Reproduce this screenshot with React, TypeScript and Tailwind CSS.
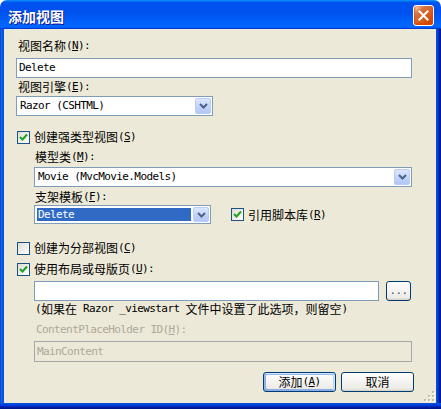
import type { ReactNode } from 'react';

const cjk = "font-['Noto_Sans_CJK_SC',sans-serif] text-[12px] leading-[16px]";
const mono = "font-['DejaVu_Sans_Mono',monospace] text-[11px] tracking-[-0.6px] leading-[16px]";

// label like 视图名称(N):
function Label({ text, keyChar, colon = true, className = '' }: { text: string; keyChar?: string; colon?: boolean; className?: string }) {
  return (
    <div className={`h-[16px] flex items-center text-black whitespace-nowrap ${className}`}>
      <span className={cjk}>{text}</span>
      {keyChar && (
        <span className={mono}>
          (<u>{keyChar}</u>){colon ? ':' : ''}
        </span>
      )}
    </div>
  );
}

function Chevron() {
  return (
    <svg width="9" height="6" viewBox="0 0 9 6">
      <path d="M1 1 L4.5 4.5 L8 1" fill="none" stroke="#4D6185" strokeWidth="2" />
    </svg>
  );
}

function Combo({ value, className, selected = false }: { value: string; className: string; selected?: boolean }) {
  return (
    <div className={`h-[20px] flex border border-[#7F9DB9] bg-white ${className}`}>
      <div className="flex-1 flex items-center p-[2px]">
        {selected ? (
          <div className="w-full h-full bg-[#316AC5] text-white flex items-center pl-[1px]">
            <span className={mono}>{value}</span>
          </div>
        ) : (
          <span className={`${mono} pl-[1px] text-black`}>{value}</span>
        )}
      </div>
      <div className="w-[16px] my-[1px] mr-[1px] rounded-[2px] border border-[#B9CDF5] bg-[linear-gradient(180deg,#DCE7FE,#C3D5FB_50%,#B2C7F6)] flex items-center justify-center">
        <Chevron />
      </div>
    </div>
  );
}

function CheckBox({ checked }: { checked: boolean }) {
  return (
    <div className="w-[13px] h-[13px] border border-[#1C5180] bg-[linear-gradient(135deg,#DCDCD7,#FFFFFF)] flex items-center justify-center shrink-0">
      {checked && (
        <svg width="9" height="9" viewBox="0 0 9 9">
          <path d="M1 4 L3.5 6.5 L8 1.5" fill="none" stroke="#21A121" strokeWidth="2" />
        </svg>
      )}
    </div>
  );
}

function CheckRow({ checked, children, className = '' }: { checked: boolean; children: ReactNode; className?: string }) {
  return (
    <div className={`h-[16px] flex items-center gap-[4px] ${className}`}>
      <CheckBox checked={checked} />
      {children}
    </div>
  );
}

function XpButton({ children, isDefault = false, className = '' }: { children: ReactNode; isDefault?: boolean; className?: string }) {
  return (
    <div
      className={`h-[20px] rounded-[3px] border border-[#003C74] bg-[linear-gradient(180deg,#FFFFFF,#ECEBE6_86%,#D6D0C5)] flex items-center justify-center text-black ${
        isDefault
          ? 'shadow-[inset_-1px_1px_#CEE7FF,inset_1px_2px_#98B8EA,inset_-2px_2px_#BCD4F6,inset_1px_-1px_#89ADE4,inset_2px_-2px_#89ADE4]'
          : ''
      } ${className}`}
    >
      {children}
    </div>
  );
}

export default function App() {
  return (
    <div className="w-[441px] h-[409px] bg-white">
      <div className="w-[441px] h-[409px] flex flex-col rounded-t-[7px] overflow-hidden">
        {/* Title bar */}
        <div className="h-[29px] shrink-0 flex items-center justify-between pl-[8px] pr-[7px] pt-[2px] bg-[linear-gradient(180deg,#0997FF,#0053EE_8%,#0050EE_40%,#0066FF_88%,#0066FF_93%,#005BFF_95%,#003DD7_96%,#003DD7)]">
          <span className="text-white font-bold text-[14px] leading-[16px] font-['Noto_Sans_CJK_SC',sans-serif] [text-shadow:1px_1px_#0F1089]">
            添加视图
          </span>
          <div className="w-[21px] h-[21px] rounded-[3px] border border-white bg-[radial-gradient(circle_at_90%_90%,#CC4600_0,#DC6527_55%,#CD7546_70%,#FFCCB2_90%,#FFFFFF_100%)] shadow-[inset_0_-1px_2px_1px_#DA4600] flex items-center justify-center">
            <svg width="11" height="11" viewBox="0 0 11 11">
              <path d="M1.5 1.5 L9.5 9.5 M9.5 1.5 L1.5 9.5" stroke="white" strokeWidth="2" strokeLinecap="square" />
            </svg>
          </div>
        </div>

        <div className="flex flex-1">
          <div className="w-[4px] bg-[linear-gradient(90deg,#0831D9,#166AEE_30%,#0855DD_60%,#0855DD)]" />

          {/* Dialog body */}
          <div className="flex-1 relative bg-[#ECE9D8] pl-[12px] flex flex-col">
            <Label text="视图名称" keyChar="N" className="mt-[9px] ml-[2px]" />
            <div className="mt-[4px] h-[20px] w-[396px] border border-[#7F9DB9] bg-white flex items-center pl-[2px]">
              <span className={`${mono} text-black`}>Delete</span>
            </div>

            <Label text="视图引擎" keyChar="E" className="mt-[1px] ml-[2px]" />
            <Combo value="Razor (CSHTML)" className="mt-[1px] w-[197px]" />

            <CheckRow checked className="mt-[13px] ml-[1px]">
              <Label text="创建强类型视图" keyChar="S" colon={false} />
            </CheckRow>

            <Label text="模型类" keyChar="M" className="mt-[4px] ml-[19px]" />
            <Combo value="Movie (MvcMovie.Models)" className="mt-[2px] ml-[18px] w-[378px]" />

            <Label text="支架模板" keyChar="F" className="mt-[2px] ml-[19px]" />
            <div className="h-[19px] flex items-center">
              <Combo value="Delete" selected className="ml-[18px] w-[177px] !h-[19px]" />
              <CheckRow checked className="ml-[20px]">
                <Label text="引用脚本库" keyChar="R" colon={false} />
              </CheckRow>
            </div>

            <CheckRow checked={false} className="mt-[16px] ml-[1px]">
              <Label text="创建为分部视图" keyChar="C" colon={false} />
            </CheckRow>
            <CheckRow checked className="mt-[5px] ml-[1px]">
              <Label text="使用布局或母版页" keyChar="U" />
            </CheckRow>

            <div className="mt-[4px] h-[20px] flex items-center">
              <div className="ml-[18px] w-[345px] h-[20px] border border-[#7F9DB9] bg-white" />
              <XpButton className="ml-[7px] w-[25px]">
                <span className={`${mono} text-[#555]`}>...</span>
              </XpButton>
            </div>

            <div className="h-[15px] ml-[19px] flex items-center whitespace-pre text-black">
              <span className={mono}>(</span>
              <span className={cjk}>如果在</span>
              <span className={`${mono} whitespace-pre`}>{' Razor _viewstart '}</span>
              <span className={cjk}>文件中设置了此选项，则留空</span>
              <span className={mono}>)</span>
            </div>

            <div className="mt-[6px] ml-[20px] h-[16px] flex items-center text-[#ACA899]">
              <span className={mono}>
                ContentPlaceHolder ID(<u>H</u>):
              </span>
            </div>
            <div className="mt-[3px] ml-[18px] w-[378px] h-[21px] border border-[#A7A6AA] bg-[#ECE9D8] flex items-center pl-[2px]">
              <span className={`${mono} text-[#ACA899]`}>MainContent</span>
            </div>

            <div className="mt-[10px] mr-[22px] flex justify-end gap-[5px]">
              <XpButton isDefault className="w-[73px]">
                <span className={cjk}>添加</span>
                <span className={mono}>
                  (<u>A</u>)
                </span>
              </XpButton>
              <XpButton className="w-[73px]">
                <span className={cjk}>取消</span>
              </XpButton>
            </div>

            {/* size grip */}
            <svg className="absolute right-[1px] bottom-[1px]" width="11" height="11" viewBox="0 0 11 11">
              {[
                [8, 0],
                [4, 4],
                [8, 4],
                [0, 8],
                [4, 8],
                [8, 8],
              ].map(([x, y], i) => (
                <g key={i}>
                  <rect x={x + 1} y={y + 1} width="2" height="2" fill="#FFFFFF" />
                  <rect x={x} y={y} width="2" height="2" fill="#C2BFA5" />
                </g>
              ))}
            </svg>
          </div>

          <div className="w-[5px] bg-[linear-gradient(90deg,#0855DD,#003BDA_40%,#001EA0_70%,#00138C)]" />
        </div>
        <div className="h-[6px] shrink-0 bg-[linear-gradient(180deg,#0855DD,#003BDA_40%,#001EA0_70%,#00138C)]" />
      </div>
    </div>
  );
}
